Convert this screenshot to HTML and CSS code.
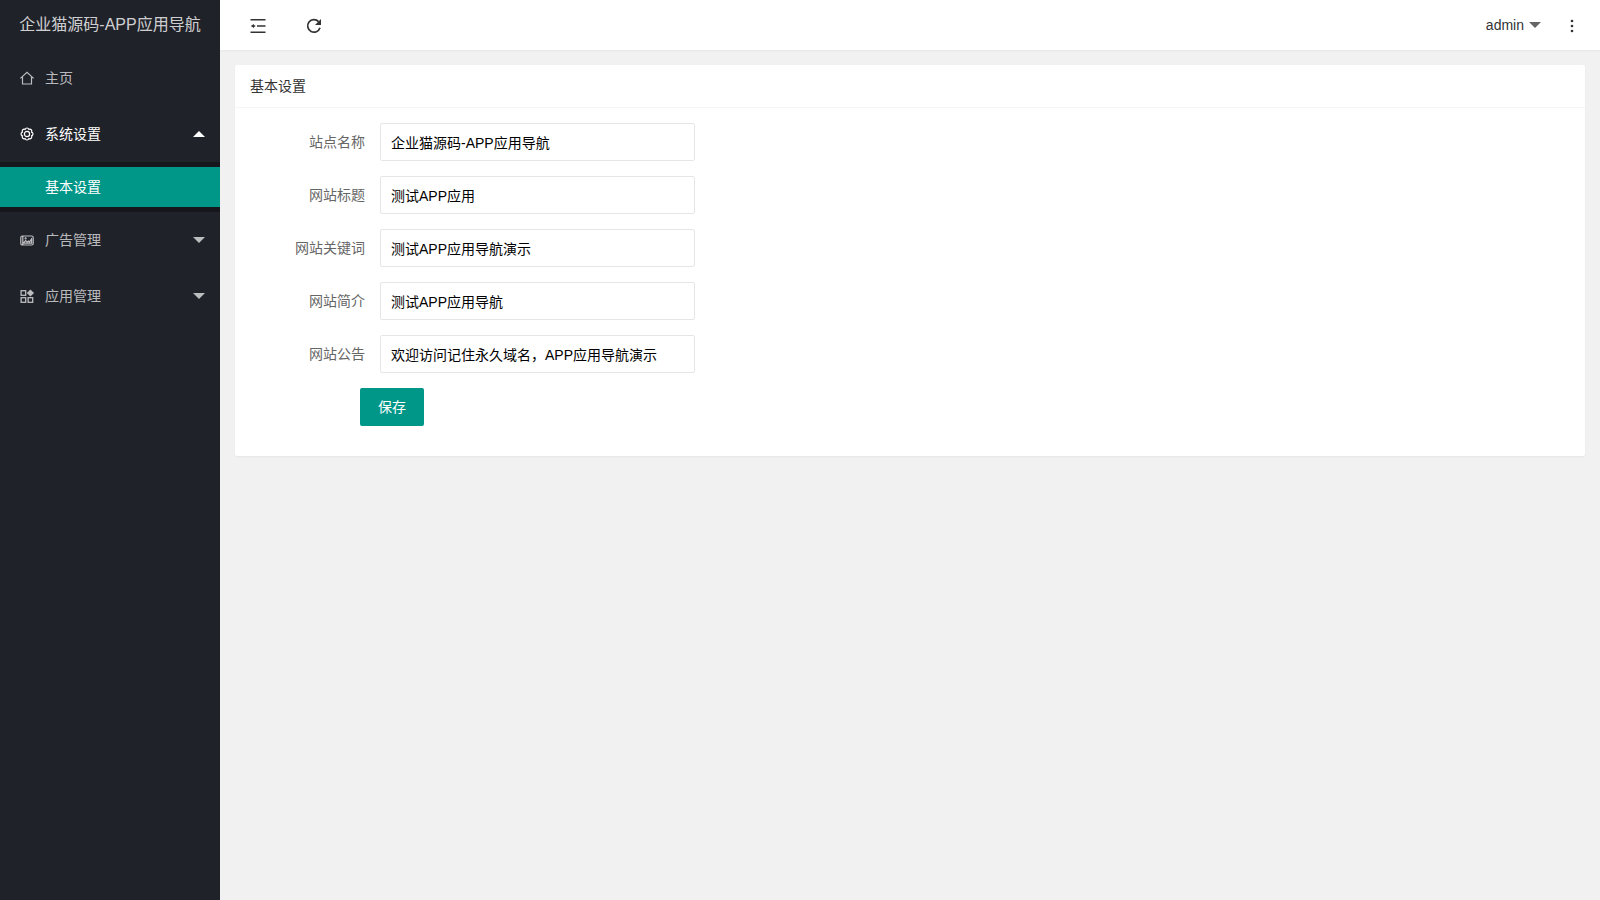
FILE: index.html
```
<!DOCTYPE html>
<html lang="zh-CN">
<head>
  <meta charset="UTF-8">
  <meta name="viewport" content="width=device-width, initial-scale=1.0">
  <title>基本设置</title>
  <link rel="stylesheet" href="styles.css">
</head>
<body>
  <div class="layout">
    <aside class="side">
      <a class="logo" href="#">企业猫源码-APP应用导航</a>
      <ul class="nav">
        <li>
          <a class="nav-link" href="#">
            <svg class="nav-icon" viewBox="0 0 14 14" fill="none" stroke="currentColor" stroke-width="1.2">
              <path d="M0.4 7.4 7 1.4 13.6 7.4M2.5 6V13H11.5V6"/>
            </svg>
            <span>主页</span>
          </a>
        </li>
        <li>
          <button class="nav-link nav-open" type="button" aria-expanded="true">
            <svg class="nav-icon" viewBox="0 0 14 14" fill="none" stroke="currentColor" stroke-width="1.2">
              <path d="M5.1 2.4A2 2 0 0 1 8.9 2.4A2 2 0 0 1 11.6 5.1A2 2 0 0 1 11.6 8.9A2 2 0 0 1 8.9 11.6A2 2 0 0 1 5.1 11.6A2 2 0 0 1 2.4 8.9A2 2 0 0 1 2.4 5.1A2 2 0 0 1 5.1 2.4z"/>
              <circle cx="7" cy="7" r="2.6"/>
            </svg>
            <span>系统设置</span>
            <i class="caret caret-up"></i>
          </button>
          <ul class="nav-child">
            <li><a class="active" href="#">基本设置</a></li>
          </ul>
        </li>
        <li>
          <button class="nav-link" type="button" aria-expanded="false">
            <svg class="nav-icon" viewBox="0 0 14 14" fill="none" stroke="currentColor" stroke-width="1.2">
              <rect x="0.8" y="3" width="12.4" height="9" rx="1.5"/>
              <path d="M2.8 3v9M11.6 5v5.2H3.2L5.6 7.6 7.2 9 8.6 8 9.6 9 11.4 6"/>
              <circle cx="5.6" cy="5.4" r="0.5"/>
            </svg>
            <span>广告管理</span>
            <i class="caret"></i>
          </button>
        </li>
        <li>
          <button class="nav-link" type="button" aria-expanded="false">
            <svg class="nav-icon" viewBox="0 0 14 14" fill="none" stroke="currentColor" stroke-width="1.3">
              <rect x="1.1" y="1.7" width="4.6" height="4.6"/>
              <rect x="1.1" y="8.7" width="4.6" height="4.6"/>
              <rect x="8.1" y="8.7" width="4.6" height="4.6"/>
              <path d="M10.4 0.4 14 4 10.4 7.6 6.8 4z" fill="currentColor" stroke="none"/>
            </svg>
            <span>应用管理</span>
            <i class="caret"></i>
          </button>
        </li>
      </ul>
    </aside>

    <div class="main">
      <header class="header">
        <button class="tool" type="button" title="侧边伸缩">
          <svg viewBox="0 0 16 16" fill="none" stroke="currentColor" stroke-width="1.6">
            <path d="M0.5 1.8h15M7 8h8.5M0.5 14.2h15M3.6 8h1.6"/>
            <path d="M0.8 8 4 6v4z" fill="currentColor" stroke="none"/>
          </svg>
        </button>
        <button class="tool" type="button" title="刷新">
          <svg viewBox="0 0 16 16" fill="none" stroke="currentColor" stroke-width="1.7">
            <path d="M12.6 3.6A6.3 6.3 0 1 0 14 9.8"/>
            <path d="M15 1v6H9z" fill="currentColor" stroke="none"/>
          </svg>
        </button>
        <div class="header-right">
          <button class="user" type="button">admin <i class="caret"></i></button>
          <button class="tool" type="button" title="更多">
            <svg viewBox="0 0 16 16" fill="currentColor">
              <circle cx="8" cy="3" r="1.3"/>
              <circle cx="8" cy="8" r="1.3"/>
              <circle cx="8" cy="13" r="1.3"/>
            </svg>
          </button>
        </div>
      </header>

      <main class="content">
        <section class="card">
          <h1 class="card-header">基本设置</h1>
          <form class="form">
            <div class="form-item">
              <label for="sitename">站点名称</label>
              <input type="text" id="sitename" value="企业猫源码-APP应用导航">
            </div>
            <div class="form-item">
              <label for="title">网站标题</label>
              <input type="text" id="title" value="测试APP应用">
            </div>
            <div class="form-item">
              <label for="keywords">网站关键词</label>
              <input type="text" id="keywords" value="测试APP应用导航演示">
            </div>
            <div class="form-item">
              <label for="descript">网站简介</label>
              <input type="text" id="descript" value="测试APP应用导航">
            </div>
            <div class="form-item">
              <label for="notice">网站公告</label>
              <input type="text" id="notice" value="欢迎访问记住永久域名，APP应用导航演示">
            </div>
            <div class="form-item form-action">
              <button class="btn" type="button">保存</button>
            </div>
          </form>
        </section>
      </main>
    </div>
  </div>
</body>
</html>
```
FILE: styles.css
```
:root {
  --side: #20222a;
  --green: #009688;
  --side-text: rgba(255, 255, 255, 0.7);
}

* {
  box-sizing: border-box;
}

body {
  margin: 0;
  font: 14px/24px "Liberation Sans", "Noto Sans CJK SC", sans-serif;
  color: #333;
  background-color: #f1f1f2;
}

ul {
  margin: 0;
  padding: 0;
  list-style: none;
}

a {
  text-decoration: none;
}

button,
input {
  font: inherit;
}

button {
  border: none;
  background: none;
  color: inherit;
  cursor: pointer;
}

.layout {
  display: flex;
  min-height: 100vh;
}

/* Sidebar */
.side {
  flex: 0 0 220px;
  background-color: var(--side);
  color: var(--side-text);
}

.logo {
  display: block;
  height: 50px;
  line-height: 50px;
  text-align: center;
  font-size: 16px;
  color: rgba(255, 255, 255, 0.8);
  white-space: nowrap;
}

.nav-link {
  display: flex;
  align-items: center;
  width: 100%;
  height: 56px;
  padding: 0 15px 0 20px;
  color: var(--side-text);
  text-align: left;
}

.nav-link:hover,
.nav-open {
  color: #fff;
}

.nav-icon {
  width: 14px;
  height: 14px;
  margin-right: 11px;
}

.nav-link .caret {
  margin-left: auto;
}

.nav-child {
  padding: 5px 0;
  background-color: rgba(0, 0, 0, 0.3);
}

.nav-child a {
  display: block;
  height: 40px;
  line-height: 40px;
  padding-left: 45px;
  color: var(--side-text);
}

.nav-child .active {
  background-color: var(--green);
  color: #fff;
}

.caret {
  display: inline-block;
  border: 6px solid transparent;
  border-top-color: currentColor;
  border-bottom-width: 0;
}

.caret-up {
  border-width: 0 6px 6px;
  border-bottom-color: currentColor;
}

/* Header */
.main {
  flex: 1;
  min-width: 0;
}

.header {
  display: flex;
  height: 50px;
  padding-left: 10px;
  background-color: #fff;
  box-shadow: 0 1px 2px rgba(0, 0, 0, 0.05);
}

.header-right {
  display: flex;
  margin-left: auto;
}

.tool {
  display: flex;
  align-items: center;
  justify-content: center;
  width: 56px;
  height: 52px;
  padding: 0;
}

.tool svg {
  width: 16px;
  height: 16px;
}

.user {
  display: flex;
  align-items: center;
  gap: 5px;
  padding: 0 3px 0 20px;
}

.user .caret {
  color: #666;
}

/* Content */
.content {
  padding: 15px;
}

.card {
  background-color: #fff;
  border-radius: 2px;
  box-shadow: 0 1px 2px rgba(0, 0, 0, 0.05);
}

.card-header {
  margin: 0;
  padding: 0 15px;
  line-height: 42px;
  font-size: 14px;
  font-weight: normal;
  border-bottom: 1px solid #f6f6f6;
}

.form {
  padding: 15px;
}

.form-item {
  display: flex;
  align-items: center;
  width: 445px;
  max-width: 100%;
  margin-bottom: 15px;
}

.form-item label {
  flex: 0 0 130px;
  padding-right: 15px;
  text-align: right;
  color: #666;
}

.form-item input {
  flex: 1;
  min-width: 0;
  height: 38px;
  padding: 0 10px;
  border: 1px solid #e6e6e6;
  border-radius: 2px;
  background-color: #fff;
  color: #000;
}

.form-item input:focus {
  outline: none;
  border-color: #d2d2d2;
}

.form-action {
  padding-left: 110px;
}

.btn {
  height: 38px;
  padding: 0 18px;
  border-radius: 2px;
  background-color: var(--green);
  color: #fff;
}

.btn:hover {
  opacity: 0.8;
}
```
